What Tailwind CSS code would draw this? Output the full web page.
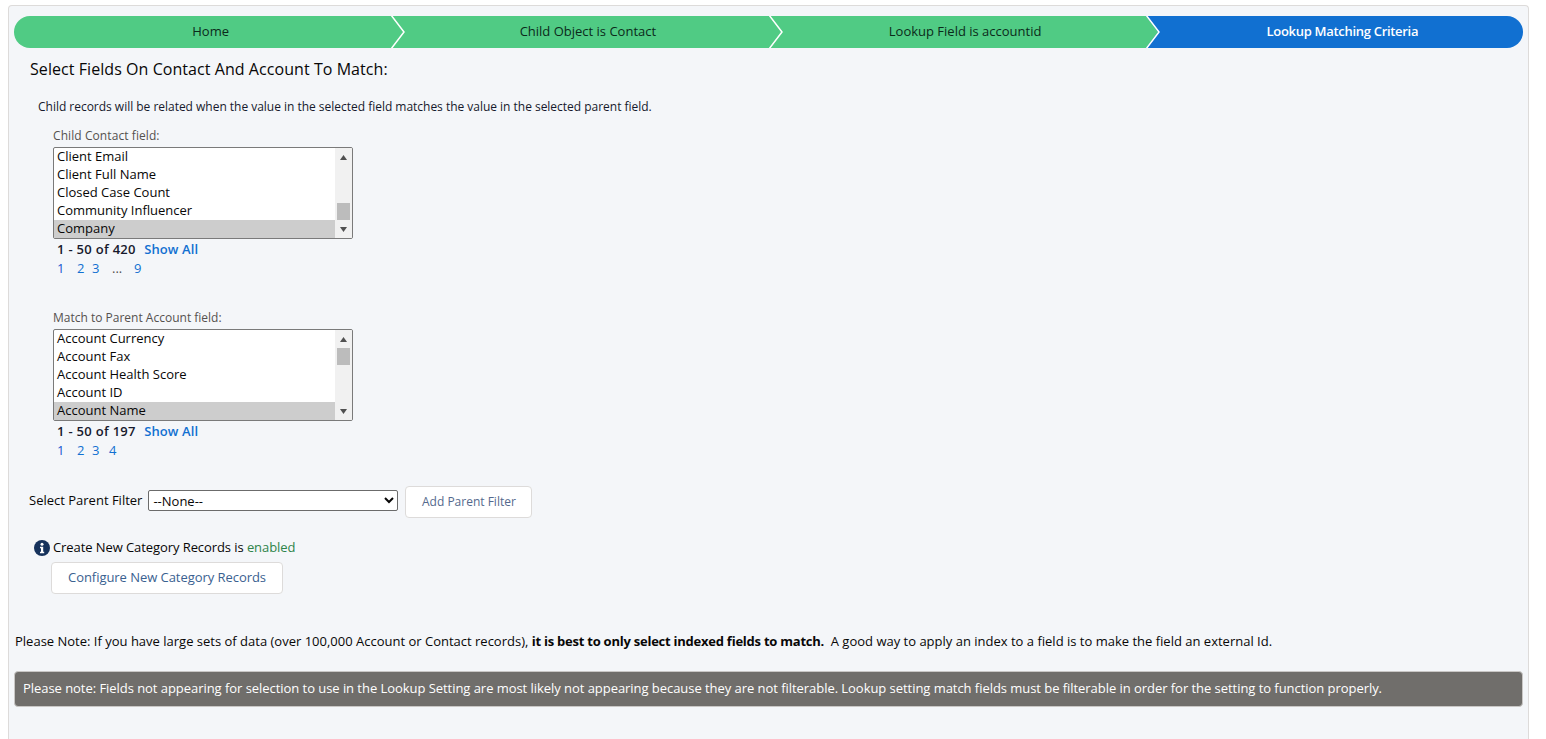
<!DOCTYPE html>
<html lang="en">
<head>
  <meta charset="UTF-8" />
  <title>Lookup Matching Criteria</title>
  <script src="https://cdn.jsdelivr.net/npm/@tailwindcss/browser@4"></script>
</head>
<body class="bg-white h-[739px] overflow-hidden font-['Open_Sans',sans-serif] text-[#080707] text-[13px]">

  <div class="ml-2 mt-[5px] w-[1521px] h-[734px] bg-[#f4f6f9] border border-[#dddbda] border-b-0 rounded-t-[4px] px-[5px] pt-[10px]">

    <!-- Path -->
    <div class="flex h-8 w-[1509px] text-[13px]">
      <div class="relative flex-1 flex items-center justify-center pl-4 bg-[#50cb84] rounded-l-2xl text-[#0b2a1a]">
        Home
        <svg class="absolute left-full top-0 z-10" width="14" height="32"><polygon points="0,0 12,16 0,32" fill="#50cb84"/><polyline points="0,-1 13,16 0,33" fill="none" stroke="#fff" stroke-width="1.5"/></svg>
      </div>
      <div class="relative flex-1 flex items-center justify-center pl-4 bg-[#50cb84] text-[#0b2a1a]">
        Child Object is Contact
        <svg class="absolute left-full top-0 z-10" width="14" height="32"><polygon points="0,0 12,16 0,32" fill="#50cb84"/><polyline points="0,-1 13,16 0,33" fill="none" stroke="#fff" stroke-width="1.5"/></svg>
      </div>
      <div class="relative flex-1 flex items-center justify-center pl-4 bg-[#50cb84] text-[#0b2a1a]">
        Lookup Field is accountid
        <svg class="absolute left-full top-0 z-10" width="14" height="32"><polygon points="0,0 12,16 0,32" fill="#50cb84"/><polyline points="0,-1 13,16 0,33" fill="none" stroke="#fff" stroke-width="1.5"/></svg>
      </div>
      <div class="flex-1 flex items-center justify-center pl-4 bg-[#1170d1] rounded-r-2xl text-white font-semibold tracking-[-0.3px]">
        Lookup Matching Criteria
      </div>
    </div>

    <h2 class="ml-4 mt-[11px] text-[16px] leading-5 tracking-[0.06px]">Select Fields On Contact And Account To Match:</h2>
    <p class="ml-6 mt-[19px] text-[12px] leading-[18px] text-[#16192c] tracking-[-0.02px]">Child records will be related when the value in the selected field matches the value in the selected parent field.</p>

    <!-- Child field -->
    <div class="ml-[39px] mt-[11px] w-[300px]">
      <label class="block text-[12px] leading-[18px] text-[#54514f] tracking-[0.08px]">Child Contact field:</label>
      <div class="mt-[2px] flex h-[92px] border border-[#7a7a7a] rounded-[2px] bg-white overflow-hidden">
        <ul class="flex-1">
          <li class="h-[18px] pl-[3px] leading-4">Client Email</li>
          <li class="h-[18px] pl-[3px] leading-4">Client Full Name</li>
          <li class="h-[18px] pl-[3px] leading-4">Closed Case Count</li>
          <li class="h-[18px] pl-[3px] leading-4">Community Influencer</li>
          <li class="h-[18px] pl-[3px] leading-4 bg-[#cdcdcd]">Company</li>
        </ul>
        <div class="w-[17px] bg-[#f1f1f1] flex flex-col items-center">
          <svg class="mt-[7px]" width="7" height="5"><polygon points="3.5,0 7,5 0,5" fill="#505050"/></svg>
          <div class="w-[13px] h-[17px] bg-[#bcbcbc] mt-[43px]"></div>
          <svg class="mt-[7px]" width="7" height="5"><polygon points="0,0 7,0 3.5,5" fill="#505050"/></svg>
        </div>
      </div>
      <div class="ml-1 mt-px leading-[18px] font-semibold text-[#16192c]"><span class="tracking-[0.3px]">1 - 50 of 420</span> <a class="ml-[5px] text-[#1170d1] tracking-[0.1px]">Show All</a></div>
      <div class="ml-1 mt-px flex leading-[18px] text-[#1170d1]">
        <a class="w-5 text-[#1a56d1]">1</a><a class="w-[15px]">2</a><a class="w-5">3</a><a class="w-[22px] text-[#54514f]">...</a><a>9</a>
      </div>
    </div>

    <!-- Parent field -->
    <div class="ml-[39px] mt-[32px] w-[300px]">
      <label class="block text-[12px] leading-[18px] text-[#54514f]">Match to Parent Account field:</label>
      <div class="mt-[2px] flex h-[92px] border border-[#7a7a7a] rounded-[2px] bg-white overflow-hidden">
        <ul class="flex-1">
          <li class="h-[18px] pl-[3px] leading-4">Account Currency</li>
          <li class="h-[18px] pl-[3px] leading-4">Account Fax</li>
          <li class="h-[18px] pl-[3px] leading-4">Account Health Score</li>
          <li class="h-[18px] pl-[3px] leading-4">Account ID</li>
          <li class="h-[18px] pl-[3px] leading-4 bg-[#cdcdcd]">Account Name</li>
        </ul>
        <div class="w-[17px] bg-[#f1f1f1] flex flex-col items-center">
          <svg class="mt-[7px]" width="7" height="5"><polygon points="3.5,0 7,5 0,5" fill="#505050"/></svg>
          <div class="w-[13px] h-[17px] bg-[#bcbcbc] mt-[6px]"></div>
          <svg class="mt-[44px]" width="7" height="5"><polygon points="0,0 7,0 3.5,5" fill="#505050"/></svg>
        </div>
      </div>
      <div class="ml-1 mt-px leading-[18px] font-semibold text-[#16192c]"><span class="tracking-[0.3px]">1 - 50 of 197</span> <a class="ml-[5px] text-[#1170d1] tracking-[0.1px]">Show All</a></div>
      <div class="ml-1 mt-px flex leading-[18px] text-[#1170d1]">
        <a class="w-5 text-[#1a56d1]">1</a><a class="w-[15px]">2</a><a class="w-[17px]">3</a><a>4</a>
      </div>
    </div>

    <!-- Parent filter -->
    <div class="ml-[15px] mt-[27px] flex items-center h-8">
      <span class="mr-[6px] -mt-[2px]">Select Parent Filter</span>
      <select class="w-[250px] h-[21px] -mt-[3px] border border-[#6b6b6b] rounded-[2px] bg-white text-[13px]">
        <option>--None--</option>
      </select>
      <button class="ml-[7px] w-[127px] h-8 bg-white border border-[#dddbda] rounded-[4px] text-[12px] text-[#54698d]">Add Parent Filter</button>
    </div>

    <!-- Category records -->
    <div class="ml-5 mt-[21px] flex items-center h-[18px]">
      <svg width="16" height="16" viewBox="0 0 16 16" class="mr-[3px]">
        <circle cx="8" cy="8" r="8" fill="#16325c"/>
        <circle cx="8" cy="4.2" r="1.5" fill="#fff"/>
        <path d="M6 6.8h3.2v5h1v1.4H6v-1.4h1v-3.6H6z" fill="#fff"/>
      </svg>
      <span class="tracking-[-0.08px]">Create New Category Records is <span class="text-[#2e844a]">enabled</span></span>
    </div>
    <button class="ml-[37px] mt-[5px] w-[232px] h-8 bg-white border border-[#dddbda] rounded-[4px] text-[#3a6190] tracking-[-0.05px]">Configure New Category Records</button>

    <!-- Notes -->
    <p class="ml-px mt-[38px] leading-[18px] whitespace-pre">Please Note: If you have large sets of data (over 100,000 Account or Contact records), <b class="font-bold tracking-[-0.24px]">it is best to only select indexed fields to match.</b>  A good way to apply an index to a field is to make the field an external Id.</p>
    <div class="mt-[21px] w-[1509px] h-9 flex items-center pl-2 bg-[#706e6b] border border-[#c9c7c5] rounded-[4px] text-white font-medium tracking-[-0.048px]">Please note: Fields not appearing for selection to use in the Lookup Setting are most likely not appearing because they are not filterable. Lookup setting match fields must be filterable in order for the setting to function properly.</div>
  </div>

</body>
</html>
